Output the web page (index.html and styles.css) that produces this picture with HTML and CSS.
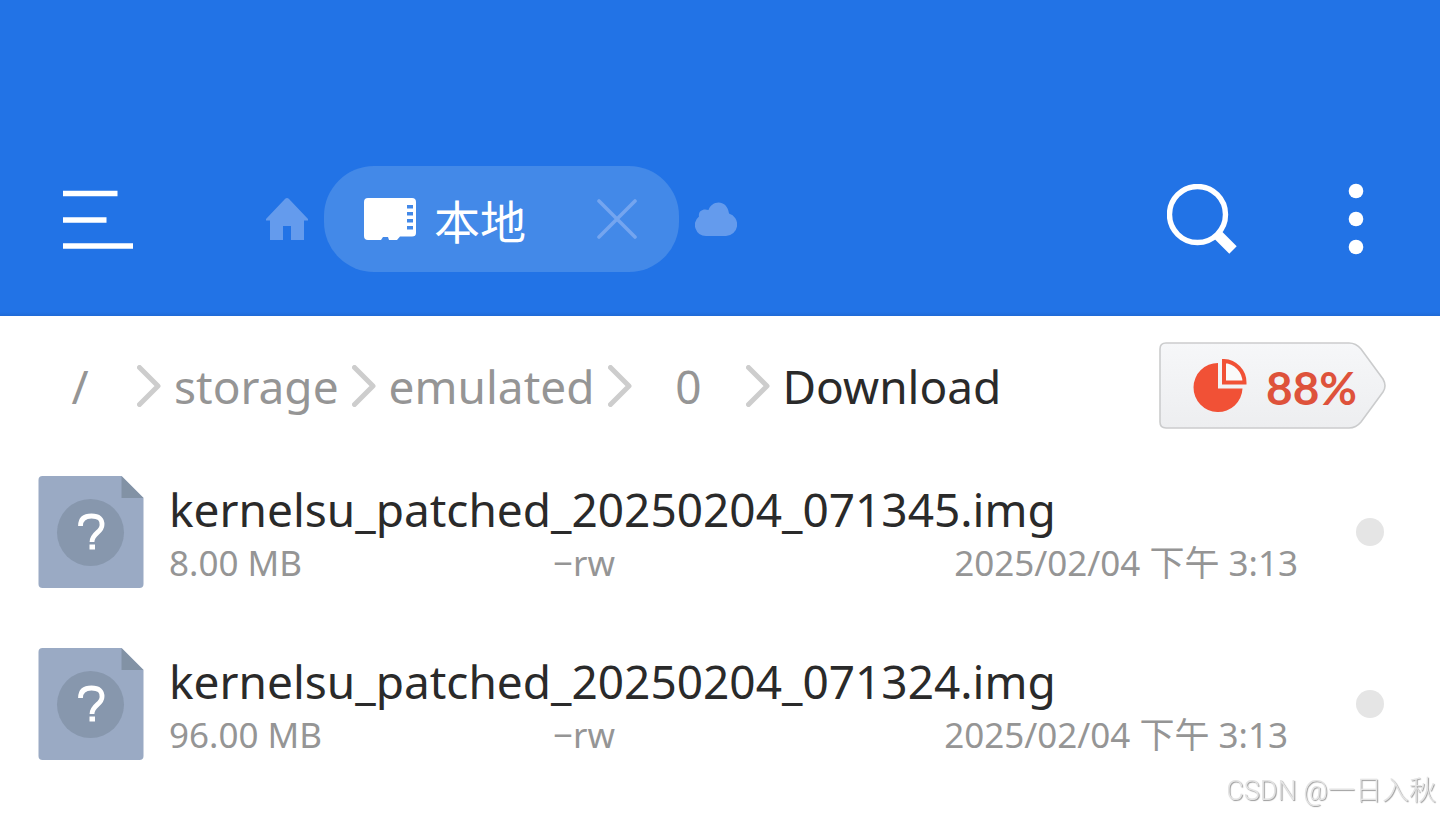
FILE: index.html
```html
<!DOCTYPE html>
<html lang="zh-CN">
<head>
<meta charset="utf-8">
<meta name="viewport" content="width=device-width, initial-scale=1">
<title>Download</title>
<link rel="stylesheet" href="styles.css">
</head>
<body>
<header class="topbar">
  <button class="icon-button menu" type="button" aria-label="Menu">
    <svg width="70" height="60" viewBox="0 0 70 60"><path d="M0 4.500h54.500M0 31h43.500M0 57h70" stroke="#fff" stroke-width="5.400"/></svg>
  </button>
  <nav class="tabs">
    <button class="icon-button" type="button" aria-label="Home">
      <svg width="42" height="42" viewBox="0 0 42 42"><path d="M19.200.8q1.800-1.600 3.600 0L42 21v1.600h-4V42H25V28h-8v14H4V22.600H0V21z" fill="#649bed"/></svg>
    </button>
    <div class="tab">
      <svg width="52" height="42" viewBox="0 0 52 42"><path fill="#fff" fill-rule="evenodd" d="M4 0h44q4 0 4 4v31q0 3.500-4 3.500H36l-3 3.500h-8l-1-3h-5l-2 3H4q-4 0-4-4V4q0-4 4-4zM43 7v3.500h6V7zM43 14v3.500h6V14zM43 21v3.500h6V21zM43 28v3.500h6V28z"/></svg>
      <span class="tab-label">本地</span>
      <button class="icon-button tab-close" type="button" aria-label="Close">
        <svg width="40" height="40" viewBox="0 0 40 40"><path d="M2 2l36 36M38 2L2 38" stroke="#74a5ef" stroke-width="3.600" stroke-linecap="round"/></svg>
      </button>
    </div>
    <button class="icon-button" type="button" aria-label="Cloud">
      <svg width="42" height="34" viewBox="0 0 42 34"><path d="M11 34A11 11 0 0 1 4 14.500C3 9 8 6 13.500 8 17-2 32-3 34 11.500A11.500 11.500 0 0 1 31 34z" fill="#649bed"/></svg>
    </button>
  </nav>
  <button class="icon-button search" type="button" aria-label="Search">
    <svg width="70" height="70" viewBox="0 0 70 70"><circle cx="30.500" cy="30.500" r="28" fill="none" stroke="#fff" stroke-width="5.400"/><path d="M51.500 51.500L66 66" stroke="#fff" stroke-width="10.500"/></svg>
  </button>
  <button class="icon-button" type="button" aria-label="More">
    <svg width="16" height="72" viewBox="0 0 16 72"><g fill="#fff"><circle cx="8" cy="8" r="7.300"/><circle cx="8" cy="36" r="7.300"/><circle cx="8" cy="64" r="7.300"/></g></svg>
  </button>
</header>
<main>
  <div class="pathbar">
    <nav class="crumbs">
      <a class="crumb" href="#">/</a>
      <svg class="chevron" width="24" height="42" viewBox="0 0 24 42"><path d="M2.500 2.500L21 21 2.500 39.500"/></svg>
      <a class="crumb" href="#">storage</a>
      <svg class="chevron" width="24" height="42" viewBox="0 0 24 42"><path d="M2.500 2.500L21 21 2.500 39.500"/></svg>
      <a class="crumb" href="#">emulated</a>
      <svg class="chevron" width="24" height="42" viewBox="0 0 24 42"><path d="M2.500 2.500L21 21 2.500 39.500"/></svg>
      <a class="crumb" href="#">0</a>
      <svg class="chevron" width="24" height="42" viewBox="0 0 24 42"><path d="M2.500 2.500L21 21 2.500 39.500"/></svg>
      <a class="crumb current" href="#" aria-current="page">Download</a>
    </nav>
    <button class="usage" type="button">
      <svg class="usage-shape" width="228" height="88" viewBox="0 0 228 88">
        <defs><linearGradient id="tag" x1="0" y1="0" x2="0" y2="1"><stop offset="0" stop-color="#f6f7f9"/><stop offset="1" stop-color="#edeef0"/></linearGradient></defs>
        <path d="M7 1h183q7 0 12 6l22 30q4 7 0 13l-22 30q-5 6-12 6H7q-6 0-6-6V7q0-6 6-6z" fill="url(#tag)" stroke="#cbcccd" stroke-width="1.600"/>
      </svg>
      <svg class="usage-pie" width="54" height="54" viewBox="0 0 54 54"><path d="M25 4v25.500h24.500A24.500 24.500 0 1 1 25 4z" fill="#f15136"/><path d="M31 2v21.500h20.500A21.500 21.500 0 0 0 31 2z" fill="#fafafa" stroke="#f15136" stroke-width="4"/></svg>
      <span class="usage-value">88%</span>
    </button>
  </div>
  <ul class="files">
    <li class="file">
      <svg width="106" height="112" viewBox="0 0 106 112"><path d="M4.500 0h79l22 22v86q0 4-4 4h-97q-4 0-4-4V4q0-4 4-4z" fill="#9aaac4"/><path d="M83.500 0l22 22h-22z" fill="#8292a5"/><circle cx="52.500" cy="56.500" r="33.500" fill="#8797ad"/><path d="M42.500 50q0-10 11-10t10.500 9c0 7.500-10 8-10 17" fill="none" stroke="#fff" stroke-width="4.800"/><path d="M51.500 68.500h5.500v5h-5.500z" fill="#fff"/></svg>
      <div class="file-text">
        <h2 class="file-name">kernelsu_patched_20250204_071345.img</h2>
        <div class="meta"><span>8.00 MB</span><span>−rw</span><time datetime="2025-02-04T15:13">2025/02/04 下午 3:13</time></div>
      </div>
      <input class="pick" type="radio" name="file" aria-label="kernelsu_patched_20250204_071345.img">
    </li>
    <li class="file">
      <svg width="106" height="112" viewBox="0 0 106 112"><path d="M4.500 0h79l22 22v86q0 4-4 4h-97q-4 0-4-4V4q0-4 4-4z" fill="#9aaac4"/><path d="M83.500 0l22 22h-22z" fill="#8292a5"/><circle cx="52.500" cy="56.500" r="33.500" fill="#8797ad"/><path d="M42.500 50q0-10 11-10t10.500 9c0 7.500-10 8-10 17" fill="none" stroke="#fff" stroke-width="4.800"/><path d="M51.500 68.500h5.500v5h-5.500z" fill="#fff"/></svg>
      <div class="file-text">
        <h2 class="file-name">kernelsu_patched_20250204_071324.img</h2>
        <div class="meta wide-size"><span>96.00 MB</span><span>−rw</span><time datetime="2025-02-04T15:13">2025/02/04 下午 3:13</time></div>
      </div>
      <input class="pick" type="radio" name="file" aria-label="kernelsu_patched_20250204_071324.img">
    </li>
  </ul>
</main>
<div class="watermark">CSDN @一日入秋</div>
</body>
</html>
```
FILE: styles.css
```css
* { box-sizing: border-box; }
body {
  margin: 0;
  background: #fff;
  color: #2a2a2a;
  font-family: "Noto Sans", "Noto Sans CJK SC", sans-serif;
}
svg { display: block; flex: none; }
button { border: 0; padding: 0; background: none; font: inherit; cursor: pointer; }
.topbar {
  display: flex;
  align-items: center;
  padding: 166px 76px 44px 63px;
  background: linear-gradient(to top, #1f6ad6, #2273e6 4px);
}
.icon-button { flex: none; }
.menu { margin-right: 133px; }
.tabs { display: flex; align-items: center; gap: 16px; }
.tab {
  display: flex;
  align-items: center;
  width: 355px;
  height: 106px;
  padding: 0 42px 0 40px;
  border-radius: 50px;
  background: #4389e8;
}
.tab-label {
  margin-left: 18px;
  color: #fff;
  font: 400 46px/60px "Noto Sans CJK SC", sans-serif;
}
.tab-close { margin-left: auto; }
.search { margin: 0 111px 0 auto; }
.pathbar {
  display: flex;
  align-items: center;
  justify-content: space-between;
  padding: 26px 53px 0 36px;
}
.crumbs { display: flex; align-items: center; gap: 13px; }
.crumb {
  min-width: 88px;
  color: #959595;
  font-size: 46px;
  line-height: 64px;
  text-align: center;
  text-decoration: none;
}
.crumb.current { color: #2a2a2a; }
.chevron { fill: none; stroke: #cdcdcd; stroke-width: 5; stroke-linecap: round; stroke-linejoin: round; }
.usage { display: grid; align-items: center; }
.usage > * { grid-area: 1 / 1; }
.usage-pie { margin-left: 34px; }
.usage-value {
  margin-left: 107px;
  padding-top: 4px;
  justify-self: start;
  color: #de523b;
  font: 700 46px/64px Lato, sans-serif;
}
.files { margin: 0; padding: 46px 56px 0 38px; list-style: none; }
.file { display: flex; align-items: center; margin-bottom: 60px; }
.file-text { flex: 1; padding-top: 2px; margin-left: 25px; }
.file-name { margin: 0; font-size: 46px; font-weight: 400; line-height: 60px; }
.meta {
  display: grid;
  grid-template-columns: 384px 1fr auto;
  padding-right: 58px;
  color: #959595;
  font-size: 35px;
  line-height: 48px;
}
.wide-size { padding-right: 68px; }
.pick { appearance: none; width: 28px; height: 28px; margin: 0; border-radius: 50%; background: #e5e5e5; }
.watermark {
  position: fixed;
  right: 4px;
  bottom: 4px;
  color: #e4e4e4;
  font: 300 27px/42px Roboto, "Noto Sans CJK SC", sans-serif;
  text-shadow: 1px 1px 1px #999;
}
```
